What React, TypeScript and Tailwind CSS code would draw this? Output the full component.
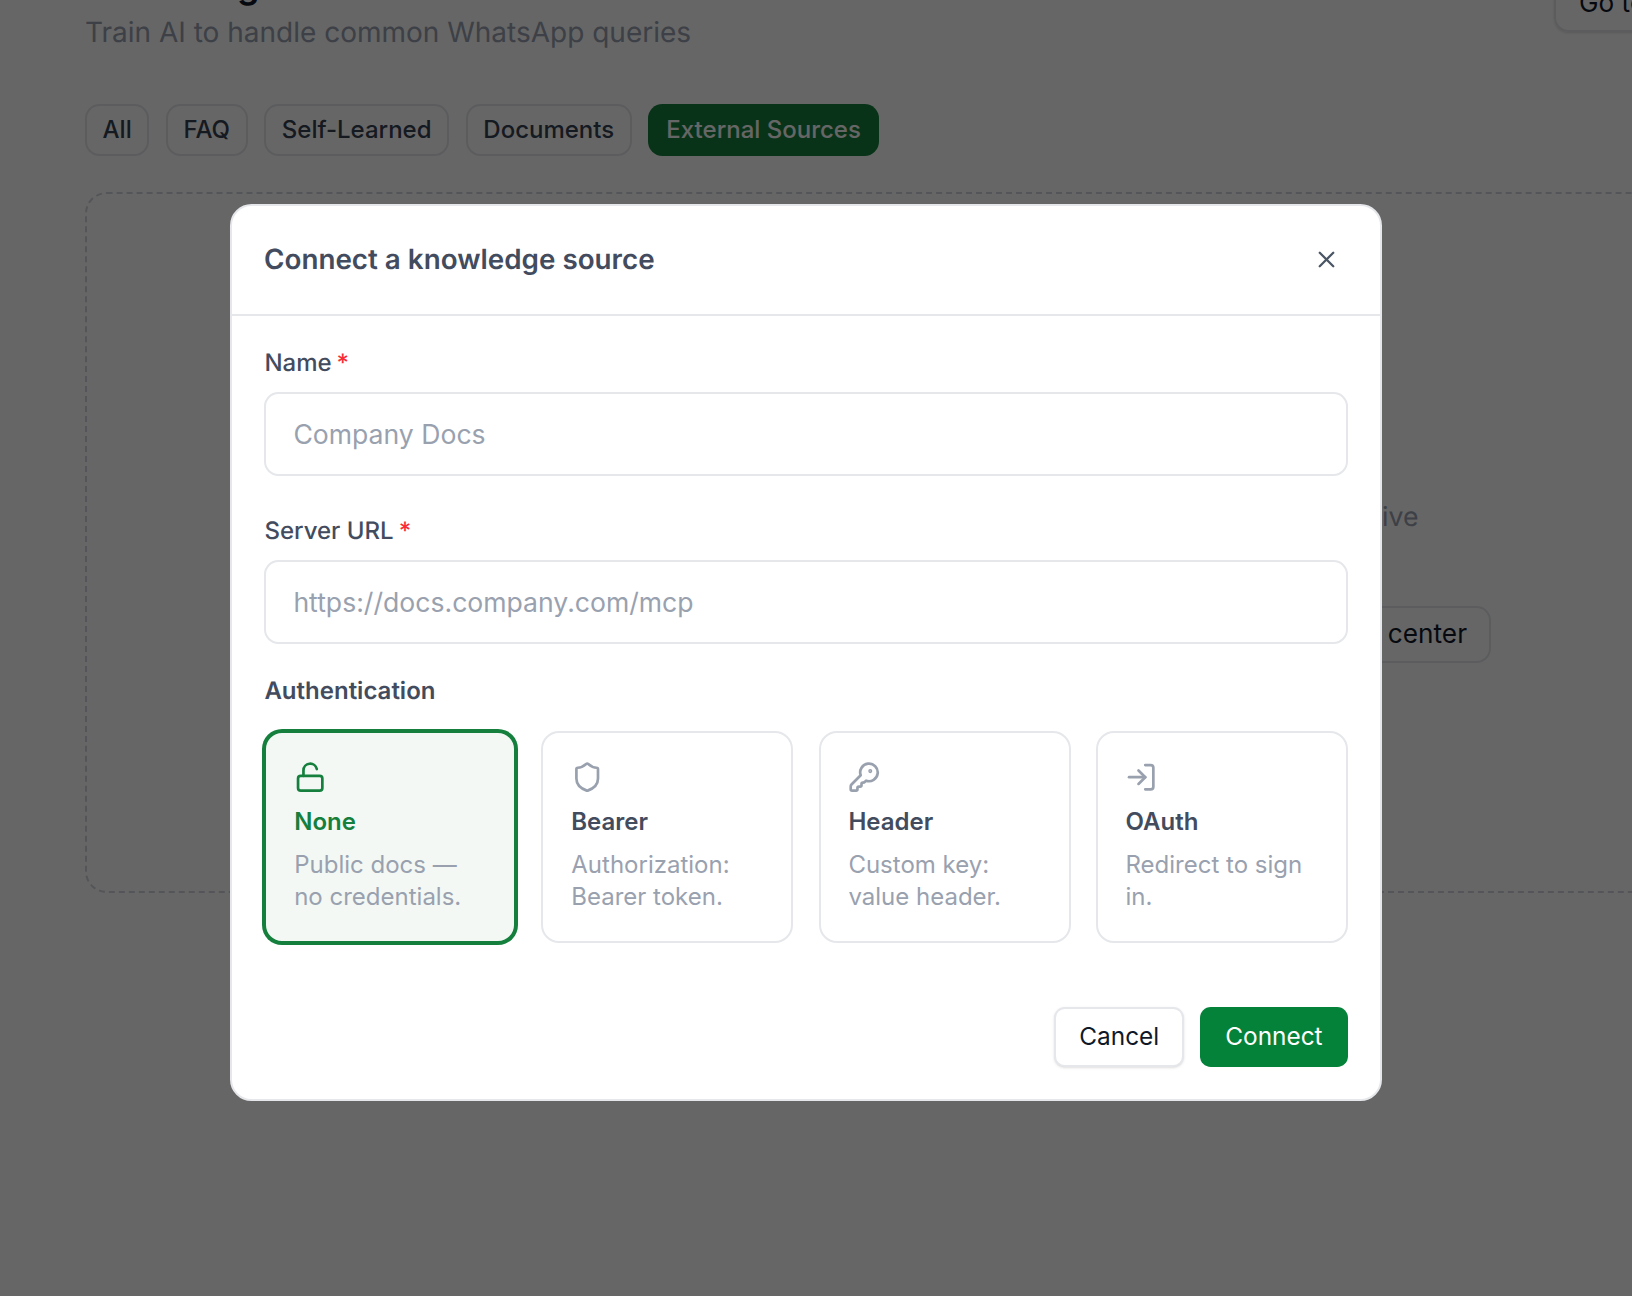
import { KeyRound, LockOpen, LogIn, Shield, X } from "lucide-react";
import type { ComponentType } from "react";

const tabs = ["All", "FAQ", "Self-Learned", "Documents"];

const authOptions: {
  title: string;
  desc: string;
  Icon: ComponentType<{ className?: string }>;
  active?: boolean;
}[] = [
  { title: "None", desc: "Public docs — no credentials.", Icon: LockOpen, active: true },
  { title: "Bearer", desc: "Authorization: Bearer token.", Icon: Shield },
  { title: "Header", desc: "Custom key: value header.", Icon: KeyRound },
  { title: "OAuth", desc: "Redirect to sign in.", Icon: LogIn },
];

function Background() {
  return (
    <div className="-mt-[40px] pl-[85px]">
      <div className="flex items-start justify-between">
        <div>
          <h1 className="text-[36px] leading-[51.4px] font-semibold text-gray-900">Knowledge</h1>
          <p className="text-[28px] leading-[43.2px] text-gray-400">
            Train AI to handle common WhatsApp queries
          </p>
        </div>
        <button className="mr-[-200px] mt-[13px] h-[59px] w-[278px] rounded-[14.4px] border-2 border-gray-200 pl-[23px] text-left text-[26.2px] text-gray-900 shadow-sm">
          Go to help
        </button>
      </div>
      <div className="mt-[49px] flex gap-[16.6px]">
        {tabs.map((t) => (
          <button
            key={t}
            className="h-[52px] rounded-[14.4px] border-2 border-gray-200 px-[15.6px] text-[24px] font-medium text-gray-700"
          >
            {t}
          </button>
        ))}
        <button className="h-[52px] rounded-[14.4px] bg-[#15803d] px-[18px] text-[24px] font-medium text-white">
          External Sources
        </button>
      </div>
      <div className="mt-[36px] flex h-[701px] w-[1600px] flex-col items-end rounded-[21.6px] border-2 border-dashed border-gray-300 pr-[192.5px] pt-[305px]">
        <p className="mr-[72px] text-[26.6px] leading-[36px] text-gray-400">
          Connect a source to keep answers live
        </p>
        <button className="mt-[71px] h-[57px] rounded-[14.4px] border-2 border-gray-200 px-[21.5px] text-[26.2px] text-gray-900">
          Visit the help center
        </button>
      </div>
    </div>
  );
}

function Field({ label, placeholder }: { label: string; placeholder: string }) {
  return (
    <div>
      <label className="mb-[11px] block text-[24px] leading-[36px] font-medium text-[#434c5e]">
        {label}
        <span className="ml-[5px] text-red-500">*</span>
      </label>
      <input
        placeholder={placeholder}
        className="h-[83.4px] w-full rounded-[14.4px] border-2 border-gray-200 bg-white px-[27px] text-[26.6px] text-gray-900 placeholder:text-gray-400"
      />
    </div>
  );
}

function AuthCard({ title, desc, Icon, active }: (typeof authOptions)[number]) {
  return (
    <button
      className={`rounded-[18px] border-2 px-[27.8px] pb-[28px] pt-[28px] text-left ${
        active ? "border-[#15803d] bg-[#f3f8f5] ring-2 ring-[#15803d]" : "border-gray-200 bg-white"
      }`}
    >
      <Icon className={`h-[32.4px] w-[32.4px] ${active ? "text-[#15803d]" : "text-gray-400"}`} />
      <div
        className={`mt-[10px] text-[24px] leading-[36px] font-semibold ${
          active ? "text-[#15803d]" : "text-[#434c5e]"
        }`}
      >
        {title}
      </div>
      <p className="mt-[9px] text-[24px] leading-[32px] text-gray-400">{desc}</p>
    </button>
  );
}

function ConnectModal() {
  return (
    <div className="h-fit w-[1152px] rounded-[21.6px] border-2 border-gray-200 bg-white">
      <div className="flex items-center justify-between border-b-2 border-gray-200 px-[32px] py-[32.4px]">
        <h2 className="text-[27.8px] leading-[43.2px] font-semibold text-[#434c5e]">
          Connect a knowledge source
        </h2>
        <button className="p-[8px] text-gray-600">
          <X className="h-[27px] w-[27px]" strokeWidth={2} />
        </button>
      </div>
      <div className="px-[32.4px] pb-[32.4px] pt-[29.5px]">
        <Field label="Name" placeholder="Company Docs" />
        <div className="mt-[37.5px]">
          <Field label="Server URL" placeholder="https://docs.company.com/mcp" />
        </div>
        <div className="mt-[29.5px] text-[24px] leading-[36px] font-semibold text-[#434c5e]">
          Authentication
        </div>
        <div className="mt-[22px] grid grid-cols-4 gap-[25.2px]">
          {authOptions.map((o) => (
            <AuthCard key={o.title} {...o} />
          ))}
        </div>
        <div className="mt-[64px] flex justify-end gap-[16px]">
          <button className="h-[60px] rounded-[10.8px] border-2 border-gray-200 bg-white px-[23px] text-[24.4px] text-gray-900 shadow-sm">
            Cancel
          </button>
          <button className="h-[60px] rounded-[10.8px] bg-[#05823a] px-[25px] text-[24.4px] text-white">
            Connect
          </button>
        </div>
      </div>
    </div>
  );
}

export default function App() {
  return (
    <div className="relative h-[1296px] w-[1632px] overflow-hidden bg-white font-['Inter',sans-serif] antialiased [text-rendering:geometricPrecision]">
      <Background />
      <div className="absolute inset-0 flex justify-center bg-black/60 pr-[20px] pt-[204px]">
        <ConnectModal />
      </div>
    </div>
  );
}
